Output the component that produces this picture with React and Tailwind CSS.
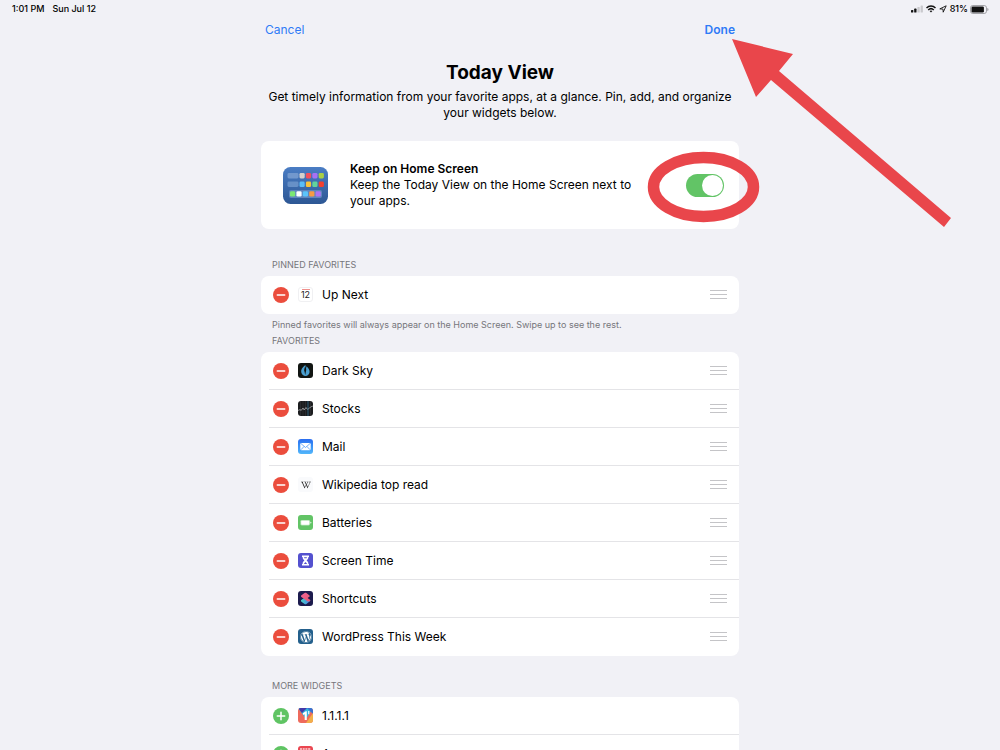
import { FaWikipediaW, FaWordpress } from "react-icons/fa";

function StatusBar() {
  return (
    <div className="flex h-[18px] items-center justify-between pr-[11px] pl-3 text-[9px] font-medium">
      <div className="flex gap-2">
        <span>1:01 PM</span>
        <span>Sun Jul 12</span>
      </div>
      <div className="flex items-center gap-[3px]">
        <svg width="12" height="8" viewBox="0 0 12 8" fill="#111">
          <rect x="0" y="5" width="2.3" height="2.5" rx="0.6" />
          <rect x="3.2" y="3.6" width="2.3" height="3.9" rx="0.6" />
          <rect x="6.4" y="2" width="2.3" height="5.5" rx="0.6" fill="#c9c9cd" />
          <rect x="9.6" y="0.4" width="2.3" height="7.1" rx="0.6" fill="#c9c9cd" />
        </svg>
        <svg width="10" height="8" viewBox="0 0 10 8" fill="none" stroke="#111" strokeWidth="1.4">
          <path d="M0.5 3 C3 0.4 7 0.4 9.5 3" />
          <path d="M2.2 4.9 C3.8 3.3 6.2 3.3 7.8 4.9" />
          <path d="M3.6 6 C4.4 5.3 5.6 5.3 6.4 6 L5 7.5 Z" fill="#111" stroke="none" />
        </svg>
        <svg width="8" height="8" viewBox="0 0 8 8" fill="none" stroke="#111" strokeWidth="0.9" strokeLinejoin="round">
          <path d="M7.2 0.8 L0.8 3.9 L4 4.1 L4.2 7.2 Z" />
        </svg>
        <span>81%</span>
        <svg className="-ml-px" width="19" height="9" viewBox="0 0 19 9">
          <rect x="0.5" y="0.5" width="16" height="8" rx="2.3" fill="none" stroke="#8e8e93" strokeWidth="0.8" />
          <rect x="1.5" y="1.5" width="12.4" height="6" rx="1.2" fill="#111" />
          <path d="M17.4 3 C18.8 3.4 18.8 5.6 17.4 6 Z" fill="#8e8e93" />
        </svg>
      </div>
    </div>
  );
}

function TodayViewIcon() {
  return (
    <svg width="45" height="37" viewBox="0 0 45 37" className="shrink-0">
      <defs>
        <linearGradient id="todayBg" x1="0" y1="0" x2="0" y2="1">
          <stop offset="0" stopColor="#4a7dc4" />
          <stop offset="1" stopColor="#2d5794" />
        </linearGradient>
      </defs>
      <rect width="45" height="37" rx="7.5" fill="url(#todayBg)" />
      <rect x="4.5" y="6" width="11" height="5.4" rx="1.4" fill="#7298cd" />
      <rect x="4.5" y="14.6" width="11" height="5.4" rx="1.4" fill="#6790c7" />
      <rect x="6" y="23" width="33" height="8" rx="2" fill="#6086be" />
      <rect x="16.5" y="6" width="5.2" height="5.4" rx="1.3" fill="#d4d0cc" />
      <rect x="22.9" y="6" width="5.2" height="5.4" rx="1.3" fill="#f2505c" />
      <rect x="29.3" y="6" width="5.2" height="5.4" rx="1.3" fill="#a771f4" />
      <rect x="35.7" y="6" width="5.2" height="5.4" rx="1.3" fill="#a9cf45" />
      <rect x="16.5" y="14.6" width="5.2" height="5.4" rx="1.3" fill="#58bdf8" />
      <rect x="22.9" y="14.6" width="5.2" height="5.4" rx="1.3" fill="#f8c33a" />
      <rect x="29.3" y="14.6" width="5.2" height="5.4" rx="1.3" fill="#62d39c" />
      <rect x="35.7" y="14.6" width="5.2" height="5.4" rx="1.3" fill="#f4402f" />
      <rect x="7" y="24.2" width="5.2" height="5.4" rx="1.3" fill="#7ce873" />
      <rect x="13.4" y="24.2" width="5.2" height="5.4" rx="1.3" fill="#ffffff" />
      <rect x="19.8" y="24.2" width="5.2" height="5.4" rx="1.3" fill="#5cc4fa" />
      <rect x="26.2" y="24.2" width="5.2" height="5.4" rx="1.3" fill="#f79b43" />
      <rect x="32.6" y="24.2" width="5.2" height="5.4" rx="1.3" fill="#ac72f5" />
    </svg>
  );
}

function AppIcon({ className, children }) {
  return (
    <span className={`flex size-[15px] shrink-0 items-center justify-center overflow-hidden rounded-[3px] ${className}`}>
      {children}
    </span>
  );
}

const calendarIcon = (
  <AppIcon className="flex-col border border-[#f0f0f2] bg-white text-[9px] leading-[10px] text-[#222]">
    <span className="h-px w-2 shrink-0 bg-[#f0908c]" />
    <span>12</span>
  </AppIcon>
);

const darkSkyIcon = (
  <AppIcon className="bg-[#111512]">
    <svg width="15" height="15" viewBox="0 0 15 15">
      <path d="M7.3 2 C4 4.5 2.6 7 3.3 9.5 C3.9 11.8 5.6 12.9 7.4 13 C9.8 13 11.5 11.3 11.6 9 C11.7 6.5 10 4.6 8.6 3.2 L8.1 5 Z" fill="#4a9fd0" />
      <path d="M7.4 3.2 C6.3 5.5 5.8 7 6.5 8.6 L7.2 12 L7.9 8.6 C8.5 7 8.2 5 7.4 3.2 Z" fill="#111512" />
    </svg>
  </AppIcon>
);

const stocksIcon = (
  <AppIcon className="bg-[#1b1c1e]">
    <svg width="15" height="15" viewBox="0 0 15 15" fill="none">
      <path d="M2.5 0 V15 M5 0 V15 M7.5 0 V15 M12.5 0 V15" stroke="#3a3b3e" strokeWidth="0.5" />
      <path d="M0 9.5 L2 8.6 L3.2 9.4 L5 7 L6.2 9 L8 6.5 L9.3 8.3 L11 7.6 L12.5 6 L15 5" stroke="#a9abae" strokeWidth="0.8" />
      <path d="M10 0 V15" stroke="#2f6e90" strokeWidth="0.8" />
    </svg>
  </AppIcon>
);

const mailIcon = (
  <AppIcon className="bg-linear-to-b from-[#2b6df0] to-[#52b6fa]">
    <svg width="15" height="15" viewBox="0 0 15 15">
      <rect x="2.3" y="4" width="10.4" height="7.2" rx="1.2" fill="#fff" />
      <path d="M2.9 4.5 L7.5 8.5 L12.1 4.5 M3 10.7 L6.1 7.4 M12 10.7 L8.9 7.4" fill="none" stroke="#3d8ff5" strokeWidth="0.7" />
    </svg>
  </AppIcon>
);

const wikipediaIcon = (
  <AppIcon className="bg-[#f9fafc] text-[#222]">
    <FaWikipediaW size={10} />
  </AppIcon>
);

const batteriesIcon = (
  <AppIcon className="bg-[#62c466]">
    <svg width="15" height="15" viewBox="0 0 15 15">
      <rect x="2.4" y="5" width="9.6" height="5.4" rx="1.3" fill="#b4e5b5" />
      <rect x="3.2" y="5.7" width="8" height="4" rx="0.7" fill="#fff" />
      <rect x="12.3" y="6.8" width="0.9" height="1.8" rx="0.4" fill="#d9f2d9" />
    </svg>
  </AppIcon>
);

const screenTimeIcon = (
  <AppIcon className="bg-[#5451cf]">
    <svg width="15" height="15" viewBox="0 0 15 15">
      <path d="M4 2.5 H11 V4 H10.4 C10.4 5.8 9.6 6.7 8.6 7.5 C9.6 8.3 10.4 9.2 10.4 11 H11 V12.5 H4 V11 H4.6 C4.6 9.2 5.4 8.3 6.4 7.5 C5.4 6.7 4.6 5.8 4.6 4 H4 Z" fill="#fff" />
      <path d="M6 4.2 H9 L8.6 5.3 H6.4 Z M7.5 8.9 L9.2 11 H5.8 Z" fill="#5451cf" />
    </svg>
  </AppIcon>
);

const shortcutsIcon = (
  <AppIcon className="bg-[#1c1b4d]">
    <svg width="15" height="15" viewBox="0 0 15 15">
      <defs>
        <linearGradient id="shortcutBottom" x1="0" y1="0" x2="1" y2="0">
          <stop offset="0" stopColor="#4bd3c4" />
          <stop offset="1" stopColor="#4a7df0" />
        </linearGradient>
        <linearGradient id="shortcutTop" x1="0" y1="0" x2="1" y2="1">
          <stop offset="0" stopColor="#f2669b" />
          <stop offset="1" stopColor="#e8566a" />
        </linearGradient>
      </defs>
      <path d="M3 9.3 L5.6 7.2 L12.2 9.3 C12.3 9.9 12 10.3 11.6 10.6 L8.4 13 C7.8 13.4 7.2 13.4 6.6 13 L3.4 10.7 C3 10.3 2.8 9.8 3 9.3 Z" fill="url(#shortcutBottom)" />
      <path d="M6.6 2 C7.2 1.6 7.8 1.6 8.4 2 L11.3 4.2 C11.9 4.7 11.9 5.3 11.3 5.8 L9.6 7 L12 8.7 C12.5 9.3 12.4 9.9 11.8 10.3 L9.8 10.6 L3.4 6 C2.8 5.4 2.8 4.8 3.4 4.3 Z" fill="url(#shortcutTop)" />
    </svg>
  </AppIcon>
);

const wordpressIcon = (
  <AppIcon className="bg-[#24608c] text-white">
    <FaWordpress size={12} />
  </AppIcon>
);

const dnsIcon = (
  <AppIcon className="bg-[#ee6a5c]">
    <svg width="15" height="15" viewBox="0 0 15 15">
      <path d="M0 0 H15 L8 11 Z" fill="#33b5e0" />
      <path d="M0 0 H9 L4 5 Z" fill="#4438a8" />
      <path d="M9 0 H15 V6 Z" fill="#3a6fd0" />
      <path d="M15 5 V15 H8 Z" fill="#f2b04a" />
      <path d="M4.8 5.2 L7.8 3.2 H8.8 V12 H6.7 V6.2 L5.3 7 Z M10.2 3 H11.3 V6.2 H10.2 Z" fill="#fff" />
    </svg>
  </AppIcon>
);

const redIcon = (
  <AppIcon className="bg-[#ea4650]">
    <svg width="15" height="15" viewBox="0 0 15 15">
      <path d="M2 3 H13" stroke="#fbd5d7" strokeWidth="1.6" strokeDasharray="2 0.7" />
    </svg>
  </AppIcon>
);

const pinned = [{ name: "Up Next", icon: calendarIcon }];

const favorites = [
  { name: "Dark Sky", icon: darkSkyIcon },
  { name: "Stocks", icon: stocksIcon },
  { name: "Mail", icon: mailIcon },
  { name: "Wikipedia top read", icon: wikipediaIcon },
  { name: "Batteries", icon: batteriesIcon },
  { name: "Screen Time", icon: screenTimeIcon },
  { name: "Shortcuts", icon: shortcutsIcon },
  { name: "WordPress This Week", icon: wordpressIcon },
];

const moreWidgets = [
  { name: "1.1.1.1", icon: dnsIcon },
  { name: "Amazon", icon: redIcon },
];

function WidgetRow({ widget, add }) {
  return (
    <li className="group flex h-[38px] pl-2">
      <div className="flex flex-1 items-center border-b border-[#e4e4e7] pr-3 pl-1 group-last:border-transparent">
        <button
          aria-label={`${add ? "Add" : "Remove"} ${widget.name}`}
          className={`size-4 shrink-0 rounded-full ${add ? "bg-[#5fc463]" : "bg-[#eb4d3d]"}`}
        >
          <svg width="16" height="16" viewBox="0 0 16 16" stroke="#fff" strokeWidth="1.5" strokeLinecap="round">
            <path d={add ? "M4.3 8 H11.7 M8 4.3 V11.7" : "M4.3 8 H11.7"} />
          </svg>
        </button>
        <span className="mr-[9px] ml-[9px]">{widget.icon}</span>
        <span className="flex-1 text-xs">{widget.name}</span>
        {!add && (
          <button aria-label={`Reorder ${widget.name}`} className="flex w-[17px] flex-col gap-[3px]">
            <span className="h-px bg-[#c4c4c7]" />
            <span className="h-px bg-[#c4c4c7]" />
            <span className="h-px bg-[#c4c4c7]" />
          </button>
        )}
      </div>
    </li>
  );
}

function WidgetList({ widgets, add }) {
  return (
    <ul className="overflow-hidden rounded-lg bg-white">
      {widgets.map((w) => (
        <WidgetRow key={w.name} widget={w} add={add} />
      ))}
    </ul>
  );
}

function SectionLabel({ children }) {
  return <h2 className="px-[11px] text-[9px] leading-4 text-[#76767b] uppercase">{children}</h2>;
}

function Annotations() {
  return (
    <svg
      className="pointer-events-none absolute top-0 left-full -ml-[100px]"
      width="320"
      height="240"
      viewBox="0 0 320 240"
      aria-hidden="true"
    >
      <path d="M93 21 L154 36 L140 53 L312 200 L305 209 L132 62 L117 79 Z" fill="#e9464b" />
      <ellipse cx="64.5" cy="169" rx="50" ry="29.5" fill="none" stroke="#e9464b" strokeWidth="11.5" />
    </svg>
  );
}

export default function App() {
  return (
    <div className="h-screen overflow-hidden bg-[#f1f1f6] font-[Inter,sans-serif] text-black">
      <StatusBar />
      <main className="relative mx-auto max-w-[478px]">
        <nav className="flex h-6 items-center justify-between px-1 text-xs text-[#2f7bf6]">
          <button>Cancel</button>
          <button className="font-semibold">Done</button>
        </nav>

        <header className="mt-[19px] text-center">
          <h1 className="text-[19px] leading-6 font-bold">Today View</h1>
          <p className="mt-1 text-xs">
            Get timely information from your favorite apps, at a glance. Pin, add, and organize
            <br />
            your widgets below.
          </p>
        </header>

        <section className="mt-5 flex h-[88px] items-center rounded-lg bg-white pr-[15px] pl-[22px]">
          <TodayViewIcon />
          <label htmlFor="keep" className="ml-[22px] flex-1 text-xs">
            <span className="block font-semibold">Keep on Home Screen</span>
            <span className="block max-w-72">Keep the Today View on the Home Screen next to your apps.</span>
          </label>
          <input
            id="keep"
            type="checkbox"
            role="switch"
            defaultChecked
            className="h-[23px] w-[38px] appearance-none rounded-full bg-[#d9d9dd] p-px before:block before:size-[21px] before:rounded-full before:bg-white checked:bg-[#62c466] checked:before:ml-auto"
          />
        </section>

        <section className="mt-7">
          <SectionLabel>Pinned Favorites</SectionLabel>
          <div className="mt-[3px]">
            <WidgetList widgets={pinned} />
          </div>
          <p className="mt-[3px] px-[11px] text-[9px] leading-4 text-[#76767b]">
            Pinned favorites will always appear on the Home Screen. Swipe up to see the rest.
          </p>
        </section>

        <section>
          <SectionLabel>Favorites</SectionLabel>
          <div className="mt-[3px]">
            <WidgetList widgets={favorites} />
          </div>
        </section>

        <section className="mt-[22px]">
          <SectionLabel>More Widgets</SectionLabel>
          <div className="mt-[3px]">
            <WidgetList widgets={moreWidgets} add />
          </div>
        </section>

        <Annotations />
      </main>
    </div>
  );
}
